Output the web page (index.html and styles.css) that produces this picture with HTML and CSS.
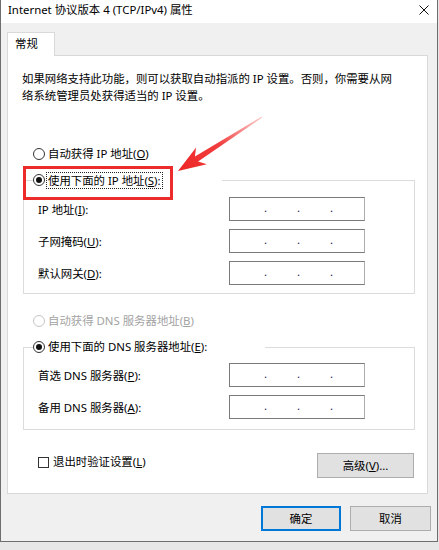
FILE: index.html
```html
<!DOCTYPE html>
<html lang="zh-CN">
<head>
  <meta charset="UTF-8" />
  <title>Internet 协议版本 4 (TCP/IPv4) 属性</title>
  <link rel="stylesheet" href="styles.css">
</head>
<body>

<div class="window">
  <div class="titlebar">
    <span class="title">Internet 协议版本 4 (TCP/IPv4) 属性</span>
    <svg class="close" width="10" height="10" viewBox="0 0 10 10">
      <path d="M0.5 0.5 L9.5 9.5 M9.5 0.5 L0.5 9.5" stroke="#111" stroke-width="1" fill="none"/>
    </svg>
  </div>

  <div class="main">
    <div class="tabs">
      <div class="tab">常规</div>
    </div>

    <div class="panel">
      <p class="desc">如果网络支持此功能，则可以获取自动指派的 IP 设置。否则，你需要从网<br>络系统管理员处获得适当的 IP 设置。</p>

      <div class="radio first">
        <span class="circle"></span>
        <span>自动获得 IP 地址(<u>O</u>)</span>
      </div>

      <fieldset class="group">
        <legend class="legend-ip">
          <span class="radio">
            <span class="circle on"></span>
            <span class="focus">使用下面的 IP 地址(<u>S</u>):</span>
          </span>
        </legend>
        <div class="rows">
          <div class="row">
            <span class="lbl">IP 地址(<u>I</u>):</span>
            <div class="ipbox"><span>.</span><span>.</span><span>.</span></div>
          </div>
          <div class="row">
            <span class="lbl">子网掩码(<u>U</u>):</span>
            <div class="ipbox"><span>.</span><span>.</span><span>.</span></div>
          </div>
          <div class="row">
            <span class="lbl">默认网关(<u>D</u>):</span>
            <div class="ipbox"><span>.</span><span>.</span><span>.</span></div>
          </div>
        </div>
      </fieldset>

      <div class="radio dns-auto disabled">
        <span class="circle"></span>
        <span>自动获得 DNS 服务器地址(<u>B</u>)</span>
      </div>

      <fieldset class="group group-dns">
        <legend class="legend-dns">
          <span class="radio">
            <span class="circle on"></span>
            <span>使用下面的 DNS 服务器地址(<u>E</u>):</span>
          </span>
        </legend>
        <div class="rows">
          <div class="row">
            <span class="lbl">首选 DNS 服务器(<u>P</u>):</span>
            <div class="ipbox"><span>.</span><span>.</span><span>.</span></div>
          </div>
          <div class="row">
            <span class="lbl">备用 DNS 服务器(<u>A</u>):</span>
            <div class="ipbox"><span>.</span><span>.</span><span>.</span></div>
          </div>
        </div>
      </fieldset>

      <div class="bottom-row">
        <div class="check">
          <span class="box"></span>
          <span>退出时验证设置(<u>L</u>)</span>
        </div>
        <div class="btn advanced">高级(<u>V</u>)...</div>
      </div>
    </div>

    <div class="actions">
      <div class="btn default">确定</div>
      <div class="btn">取消</div>
    </div>
  </div>

  <!-- annotation -->
  <div class="red-box"></div>
  <svg class="arrow" width="100" height="70" viewBox="0 0 100 70">
    <defs>
      <linearGradient id="fade" x1="92" y1="7" x2="8" y2="61" gradientUnits="userSpaceOnUse">
        <stop offset="0" stop-color="#f23a3a" stop-opacity="0.25"/>
        <stop offset="0.5" stop-color="#f02a2a" stop-opacity="0.9"/>
        <stop offset="1" stop-color="#ee2424"/>
      </linearGradient>
    </defs>
    <polygon fill="url(#fade)" points="8,61 36.9,54.3 28.1,51.6 92.3,7.5 91.7,6.5 24.9,46.6 26.1,37.5"/>
  </svg>
</div>

</body>
</html>
```

FILE: styles.css
```css
* {
  box-sizing: border-box;
}

body {
  margin: 0;
  background: #e7e7e7;
  font-family: "Noto Sans", "Noto Sans CJK SC", sans-serif;
  font-size: 11.4px;
  color: #000;
}

u {
  text-decoration: underline;
  text-underline-offset: 1px;
}

.window {
  position: relative;
  width: 438px;
  height: 542px;
  border: 1px solid #6e6e6e;
  border-top: 0;
  background: #f0f0f0;
}

.titlebar {
  height: 23px;
  background: #fff;
  display: flex;
  align-items: center;
  justify-content: space-between;
  padding: 0 8px 3px 7px;
}

.title {
  line-height: 14px;
}

.main {
  padding: 9px 0 0 6px;
}

.tabs {
  display: flex;
}

.tab {
  position: relative;
  z-index: 1;
  width: 48px;
  height: 24px;
  margin-bottom: -1px;
  padding: 2px 0 0 7px;
  line-height: 17px;
  background: #fff;
  border: 1px solid #d9d9d9;
  border-bottom: 0;
}

.panel {
  width: 421px;
  height: 439px;
  background: #fff;
  border: 1px solid #d9d9d9;
}

.desc {
  margin: 0;
  padding: 14px 0 0 14px;
  line-height: 17px;
  white-space: nowrap;
}

.radio {
  display: flex;
  align-items: center;
  gap: 3px;
  height: 16px;
  line-height: 16px;
  white-space: nowrap;
}

.radio.first {
  margin-top: 42px;
  padding-left: 25px;
}

.radio.dns-auto {
  margin-top: 19px;
  padding-left: 25px;
}

.circle {
  position: relative;
  width: 12px;
  height: 12px;
  border: 1px solid #333;
  border-radius: 50%;
  background: #fff;
  flex: none;
}

.circle.on::after {
  content: "";
  position: absolute;
  left: 2px;
  top: 2px;
  width: 6px;
  height: 6px;
  border-radius: 50%;
  background: #111;
}

.disabled {
  color: #a3a3a3;
}

.disabled .circle {
  border-color: #c4c4c4;
}

.focus {
  outline: 1px dotted #222;
  outline-offset: 0;
  padding: 0 1px;
  margin-left: -1px;
  line-height: 15px;
}

.group {
  margin: 10px 12px 0 15px;
  padding: 0 0 8px 9px;
  border: 1px solid #dcdcdc;
}

.group-dns {
  padding-bottom: 10px;
}

.group legend {
  padding: 0;
  height: 16px;
}

.legend-ip {
  width: 189px;
}

.legend-dns {
  width: 232px;
}

.rows {
  display: flex;
  flex-direction: column;
  gap: 8px;
  margin-top: 9px;
}

.group-dns .rows {
  margin-top: 8px;
}

.row {
  display: flex;
  align-items: center;
  height: 24px;
}

.lbl {
  width: 196px;
  padding-left: 5px;
  white-space: nowrap;
}

.ipbox {
  width: 136px;
  height: 24px;
  border: 1px solid #7a7a7a;
  border-right-color: #adadad;
  background: #fff;
  display: flex;
  align-items: center;
  padding-left: 34px;
  gap: 30px;
  line-height: 14px;
  color: #1a2a5a;
}

.ipbox span {
  width: 3px;
  margin-top: -3px;
}

.bottom-row {
  display: flex;
  justify-content: space-between;
  align-items: flex-start;
  margin: 23px 13px 0 30px;
}

.check {
  display: flex;
  align-items: center;
  gap: 4px;
  height: 16px;
  margin-top: 1px;
  line-height: 16px;
}

.box {
  width: 11px;
  height: 11px;
  border: 1px solid #333;
  background: #fff;
}

.btn {
  width: 81px;
  height: 25px;
  display: flex;
  align-items: center;
  justify-content: center;
  background: #e1e1e1;
  border: 1px solid #adadad;
  line-height: 16px;
}

.advanced {
  width: 97px;
}

.actions {
  display: flex;
  justify-content: flex-end;
  gap: 9px;
  margin-top: 12px;
  padding-right: 6px;
}

.btn.default {
  width: 80px;
  border: 2px solid #0078d7;
}

.red-box {
  position: absolute;
  left: 22px;
  top: 166px;
  width: 150px;
  height: 34px;
  border: 3px solid #ec2b2b;
}

.arrow {
  position: absolute;
  left: 169px;
  top: 110px;
}
```
